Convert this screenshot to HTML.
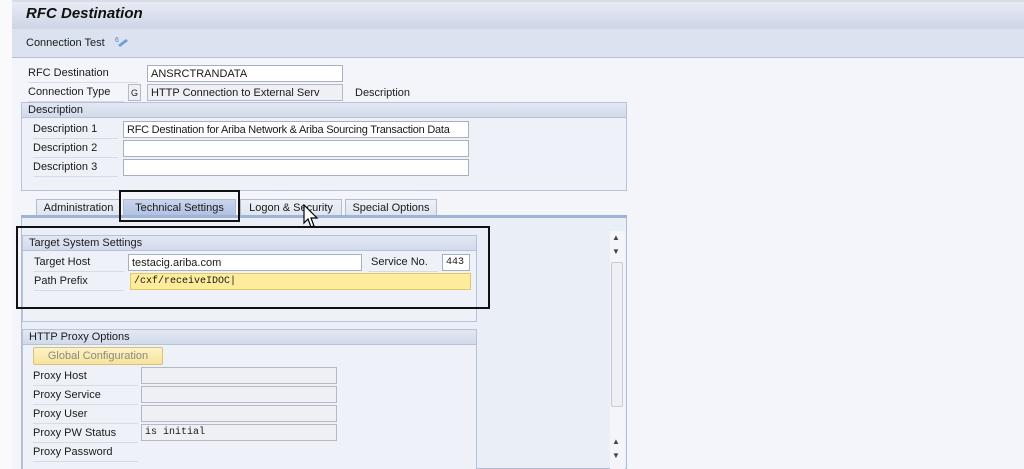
<!DOCTYPE html>
<html><head><meta charset="utf-8"><style>
*{margin:0;padding:0;box-sizing:border-box}
body{width:1024px;height:469px;overflow:hidden;background:#f4f5fa;font-family:"Liberation Sans",Arial,sans-serif;font-size:11px;color:#1a1a1a;position:relative}
.a{position:absolute}
.lbl{position:absolute;font-size:11px;line-height:17px;border-bottom:1px solid #d6dbe6}
.in{position:absolute;height:17px;background:#fff;border:1px solid #a7b0c0;font-size:11px;line-height:16px;padding-left:3px;white-space:nowrap;overflow:hidden}
.ro{background:#eef0f5;border-color:#b3b9c6}
.grp{position:absolute;border:1px solid #b8c3d9;background:#eef1f8}
.gh{height:15px;background:linear-gradient(#e3e8f3,#d2daea);border-bottom:1px solid #b8c3d9;padding-left:6px;line-height:14px;font-size:11px}
.tab{position:absolute;top:199px;height:18px;background:linear-gradient(#eef1f7,#dde3ef);border:1px solid #b3bdd0;border-bottom:none;line-height:17px;text-align:center;font-size:11px}
.mono{font-family:"Liberation Mono",monospace;font-size:10px}
</style></head><body>
<div class="a" style="left:0;top:0;width:12px;height:469px;background:#fafafc"></div>
<div class="a" style="left:12px;top:0;width:1012px;height:29px;background:linear-gradient(#e8ebf4,#cdd5e6);border-top:2px solid #d8dbe8"></div>
<div class="a" style="left:26px;top:5px;font-size:15px;font-weight:bold;font-style:italic;color:#111">RFC Destination</div>
<div class="a" style="left:12px;top:29px;width:1012px;height:29px;background:#dbe2f0;border-bottom:1px solid #b8bfd0"></div>
<div class="a" style="left:26px;top:37px">Connection Test</div>
<svg class="a" style="left:114px;top:35px" width="16" height="14" viewBox="0 0 16 14"><text x="1" y="7" font-size="7" fill="#5a7fb0" font-family="Liberation Sans">6</text><path d="M4 10 L12 4 L14 6 L6 12 Z" fill="#6fa0d8"/></svg>

<div class="lbl" style="left:28px;top:65px;width:110px">RFC Destination</div>
<div class="in" style="left:147px;top:65px;width:196px">ANSRCTRANDATA</div>
<div class="lbl" style="left:28px;top:84px;width:96px">Connection Type</div>
<div class="in ro" style="left:128px;top:84px;width:13px;font-size:9px;padding-left:2px">G</div>
<div class="in ro" style="left:147px;top:84px;width:196px">HTTP Connection to External Serv</div>
<div class="a" style="left:355px;top:87px">Description</div>

<div class="grp" style="left:21px;top:102px;width:606px;height:89px"><div class="gh">Description</div></div>
<div class="lbl" style="left:33px;top:121px;width:85px">Description 1</div>
<div class="in" style="left:123px;top:121px;width:346px;letter-spacing:-0.25px">RFC Destination for Ariba Network &amp; Ariba Sourcing Transaction Data</div>
<div class="lbl" style="left:33px;top:140px;width:85px">Description 2</div>
<div class="in" style="left:123px;top:140px;width:346px"></div>
<div class="lbl" style="left:33px;top:159px;width:85px">Description 3</div>
<div class="in" style="left:123px;top:159px;width:346px"></div>

<div class="tab" style="left:36px;width:85px">Administration</div>
<div class="tab" style="left:123px;width:113px;background:linear-gradient(#c8d5ec,#aebfe0)">Technical Settings</div>
<div class="tab" style="left:240px;width:102px">Logon &amp; Security</div>
<div class="tab" style="left:345px;width:92px">Special Options</div>
<div class="a" style="left:21px;top:215px;width:606px;height:254px;background:#eaeef7;border:1px solid #b3bdd0;border-top:3px solid #9fb3d6"></div>
<div class="a" style="left:610px;top:231px;width:15px;height:238px;background:#f3f5fa"></div>
<div class="a" style="left:612px;top:233px;font-size:8px;color:#444">&#9650;</div>
<div class="a" style="left:612px;top:247px;font-size:8px;color:#444">&#9660;</div>
<div class="a" style="left:611px;top:262px;width:12px;height:145px;background:#eef0f6;border:1px solid #c4cad8;border-radius:2px"></div>
<div class="a" style="left:612px;top:437px;font-size:8px;color:#444">&#9650;</div>
<div class="a" style="left:612px;top:451px;font-size:8px;color:#444">&#9660;</div>

<div class="grp" style="left:22px;top:235px;width:455px;height:87px"><div class="gh">Target System Settings</div></div>
<div class="lbl" style="left:34px;top:254px;width:90px">Target Host</div>
<div class="in" style="left:128px;top:254px;width:234px">testacig.ariba.com</div>
<div class="lbl" style="left:368px;top:254px;width:70px;padding-left:3px">Service No.</div>
<div class="in mono" style="left:442px;top:254px;width:28px">443</div>
<div class="lbl" style="left:34px;top:273px;width:90px">Path Prefix</div>
<div class="in mono" style="left:130px;top:273px;width:341px;background:#fdec9c;border-color:#e3c86a">/cxf/receiveIDOC|</div>

<div class="grp" style="left:22px;top:329px;width:455px;height:140px;border-bottom:none"><div class="gh">HTTP Proxy Options</div></div>
<div class="a" style="left:33px;top:347px;width:130px;height:18px;background:linear-gradient(#fdf3c8,#f6e39b);border:1px solid #d7c37a;border-radius:2px;color:#8a8a80;text-align:center;line-height:16px">Global Configuration</div>
<div class="lbl" style="left:33px;top:368px;width:105px">Proxy Host</div><div class="in ro" style="left:141px;top:367px;width:196px"></div>
<div class="lbl" style="left:33px;top:387px;width:105px">Proxy Service</div><div class="in ro" style="left:141px;top:386px;width:196px"></div>
<div class="lbl" style="left:33px;top:406px;width:105px">Proxy User</div><div class="in ro" style="left:141px;top:405px;width:196px"></div>
<div class="lbl" style="left:33px;top:425px;width:105px">Proxy PW Status</div><div class="in ro mono" style="left:141px;top:424px;width:196px">is initial</div>
<div class="lbl" style="left:33px;top:444px;width:105px">Proxy Password</div>

<div class="a" style="left:119px;top:190px;width:121px;height:32px;border:2px solid #111"></div>
<div class="a" style="left:16px;top:226px;width:474px;height:83px;border:2px solid #111"></div>
<svg class="a" style="left:303px;top:204px" width="18" height="26" viewBox="0 0 18 26"><path d="M1 1 L1 19 L5 15 L8 23 L11 22 L8 14 L14 14 Z" fill="#fff" stroke="#000" stroke-width="1.2"/></svg>
</body></html>
